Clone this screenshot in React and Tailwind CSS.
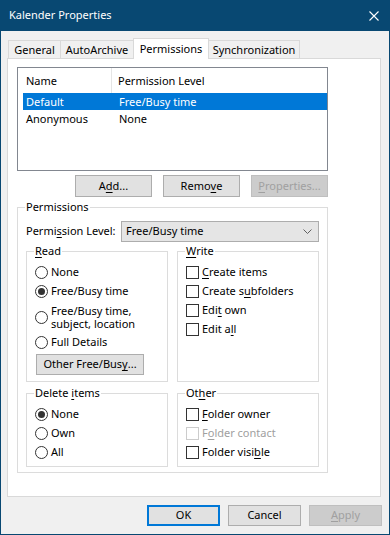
import React from "react";

function U({ children }) {
  return <span className="underline underline-offset-[2px]">{children}</span>;
}

function Radio({ checked, children, tall }) {
  return (
    <div className={`flex items-center pl-[8px] gap-[3px] ${tall ? "h-[32px]" : "h-[19px]"}`}>
      <span className="w-[13px] h-[13px] shrink-0 rounded-full border border-[#333333] bg-white flex items-center justify-center">
        {checked && <span className="w-[7px] h-[7px] rounded-full bg-[#333333]" />}
      </span>
      <span className={tall ? "leading-[13px]" : ""}>{children}</span>
    </div>
  );
}

function Check({ disabled, children }) {
  return (
    <div className={`flex items-center pl-[8px] gap-[3px] h-[19px] ${disabled ? "text-[#a0a0a0]" : ""}`}>
      <span
        className={`w-[13px] h-[13px] shrink-0 border bg-white ${
          disabled ? "border-[#cccccc]" : "border-[#333333]"
        }`}
      />
      <span>{children}</span>
    </div>
  );
}

function Group({ label, className, children }) {
  return (
    <fieldset className={`border border-[#dcdcdc] p-0 m-0 min-w-0 ${className}`}>
      <legend className="ml-[7px] px-[1px] leading-[16px]">{label}</legend>
      {children}
    </fieldset>
  );
}

function Btn({ children, disabled, primary, className = "" }) {
  let look = "bg-[#e1e1e1] border border-[#adadad]";
  if (disabled) look = "bg-[#cccccc] border border-[#bfbfbf] text-[#a0a0a0]";
  if (primary) look = "bg-[#e1e1e1] border-2 border-[#0078d7]";
  return (
    <button className={`flex items-center justify-center ${look} ${className}`}>{children}</button>
  );
}

export default function App() {
  return (
    <div className="w-[390px] h-[535px] bg-[#084872] flex flex-col text-[11px] text-black font-['Noto_Sans',sans-serif] select-none">
      {/* title bar */}
      <div className="h-[31px] shrink-0 flex items-center justify-between pl-[9px] pr-[11px] text-white">
        <span>Kalender Properties</span>
        <svg width="10" height="10" viewBox="0 0 10 10">
          <path d="M0.5 0.5L9.5 9.5M9.5 0.5L0.5 9.5" stroke="white" strokeWidth="1.1" />
        </svg>
      </div>

      <div className="flex-1 mx-[1px] mb-[1px] bg-[#f0f0f0] flex flex-col">
        {/* tabs */}
        <div className="mt-[7px] ml-[7px] h-[20px] flex items-end">
          <div className="w-[53px] h-[18px] pt-[2px] border border-b-0 border-[#d9d9d9] flex items-center justify-center">
            General
          </div>
          <div className="w-[74px] -ml-px h-[18px] pt-[2px] border border-b-0 border-[#d9d9d9] flex items-center justify-center">
            AutoArchive
          </div>
          <div className="w-[76px] -ml-px h-[21px] -mb-px relative z-10 bg-white border border-b-0 border-[#d9d9d9] flex items-start pt-[2px] justify-center">
            Permissions
          </div>
          <div className="w-[92px] -ml-px h-[18px] pt-[2px] border border-b-0 border-[#d9d9d9] flex items-center justify-center">
            Synchronization
          </div>
        </div>

        {/* tab panel */}
        <div className="ml-[6px] w-[374px] h-[439px] bg-white border border-[#d9d9d9] flex flex-col">
          {/* list */}
          <div className="mt-[8px] ml-[9px] w-[311px] h-[104px] border border-[#828790] flex flex-col">
            <div className="h-[25px] flex items-center">
              <div className="w-[94px] h-full pl-[8px] pt-[2px] flex items-center border-r border-[#e5e5e5]">Name</div>
              <div className="pl-[6px] pt-[2px]">Permission Level</div>
            </div>
            <div className="h-[17px] ml-[5px] pt-[1px] bg-[#0078d7] text-white flex items-center">
              <div className="w-[96px] pl-[3px]">Default</div>
              <div>Free/Busy time</div>
            </div>
            <div className="h-[17px] ml-[5px] pt-[1px] flex items-center">
              <div className="w-[96px] pl-[3px]">Anonymous</div>
              <div>None</div>
            </div>
          </div>

          {/* list buttons */}
          <div className="mt-[4px] ml-[9px] w-[311px] flex justify-end gap-[11px]">
            <Btn className="w-[77px] h-[22px]">
              A<U>d</U>d...
            </Btn>
            <Btn className="w-[77px] h-[22px]">
              Remo<U>v</U>e
            </Btn>
            <Btn disabled className="w-[77px] h-[22px]">
              <U>P</U>roperties...
            </Btn>
          </div>

          {/* permissions */}
          <Group label="Permissions" className="mt-[2px] ml-[9px] w-[311px] h-[274px]">
            <div className="mt-[6px] pl-[8px] flex items-center">
              <div className="w-[95px]">
                Permi<U>s</U>sion Level:
              </div>
              <div className="w-[198px] h-[21px] bg-[#e5e5e5] border border-[#adadad] flex items-center justify-between pl-[4px] pr-[6px]">
                <span>Free/Busy time</span>
                <svg width="9" height="5" viewBox="0 0 9 5">
                  <path d="M0.5 0.5L4.5 4.5L8.5 0.5" fill="none" stroke="#606060" strokeWidth="1" />
                </svg>
              </div>
            </div>

            <div className="mt-[1px] pl-[8px] flex gap-[9px]">
              <Group
                label={
                  <>
                    <U>R</U>ead
                  </>
                }
                className="w-[142px] h-[139px]"
              >
                <div className="mt-[4px]">
                  <Radio>None</Radio>
                  <Radio checked>Free/Busy time</Radio>
                  <Radio tall>
                    Free/Busy time,
                    <br />
                    subject, location
                  </Radio>
                  <Radio>Full Details</Radio>
                  <Btn className="mt-[2px] ml-[9px] w-[108px] h-[21px]">
                    Other Free/Bus<U>y</U>...
                  </Btn>
                </div>
              </Group>
              <Group
                label={
                  <>
                    <U>W</U>rite
                  </>
                }
                className="w-[142px] h-[139px]"
              >
                <div className="mt-[4px]">
                  <Check>
                    <U>C</U>reate items
                  </Check>
                  <Check>
                    Create s<U>u</U>bfolders
                  </Check>
                  <Check>
                    Edi<U>t</U> own
                  </Check>
                  <Check>
                    Edit a<U>l</U>l
                  </Check>
                </div>
              </Group>
            </div>

            <div className="mt-[3px] pl-[8px] flex gap-[9px]">
              <Group
                label={
                  <>
                    Delete <U>i</U>tems
                  </>
                }
                className="w-[142px] h-[82px]"
              >
                <div className="mt-[4px]">
                  <Radio checked>None</Radio>
                  <Radio>Own</Radio>
                  <Radio>All</Radio>
                </div>
              </Group>
              <Group
                label={
                  <>
                    Ot<U>h</U>er
                  </>
                }
                className="w-[142px] h-[82px]"
              >
                <div className="mt-[4px]">
                  <Check>
                    <U>F</U>older owner
                  </Check>
                  <Check disabled>
                    F<U>o</U>lder contact
                  </Check>
                  <Check>
                    Folder visi<U>b</U>le
                  </Check>
                </div>
              </Group>
            </div>
          </Group>
        </div>

        {/* dialog buttons */}
        <div className="mt-[8px] pr-[7px] flex justify-end gap-[8px]">
          <Btn primary className="w-[73px] h-[21px]">
            OK
          </Btn>
          <Btn className="w-[73px] h-[21px]">Cancel</Btn>
          <Btn disabled className="w-[73px] h-[21px]">
            <U>A</U>pply
          </Btn>
        </div>
      </div>
    </div>
  );
}
